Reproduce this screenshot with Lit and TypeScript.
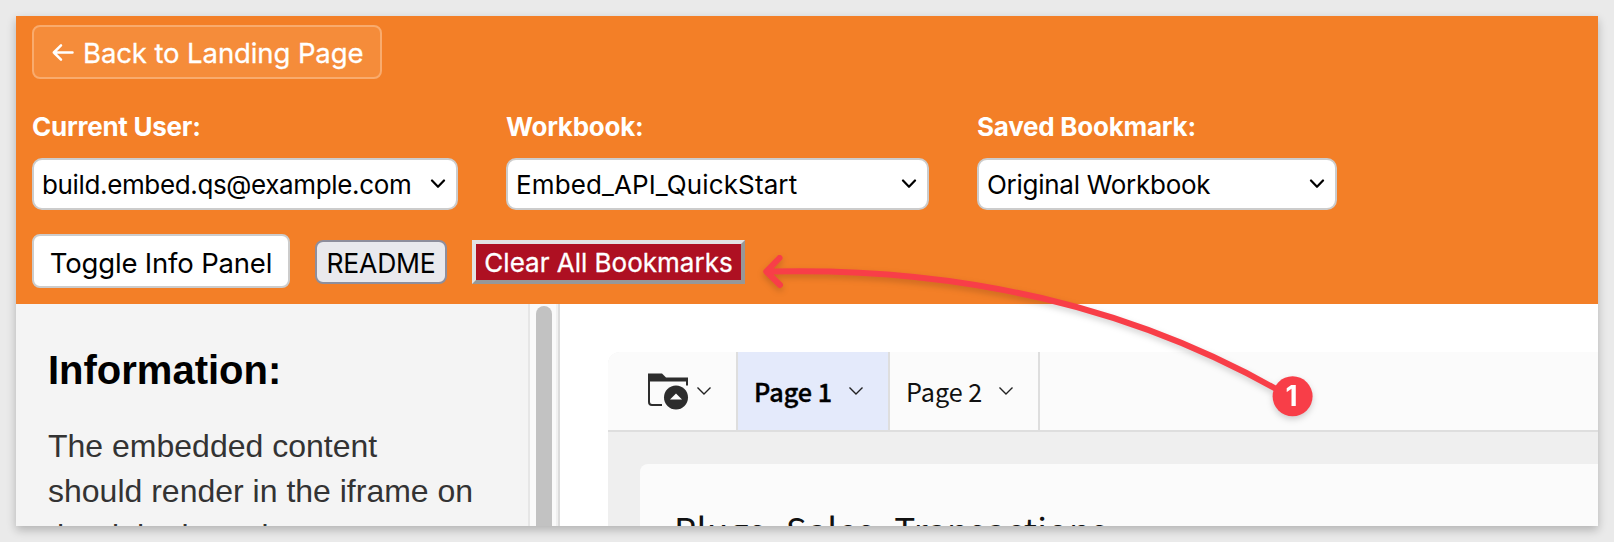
import { LitElement, html, svg, css } from 'lit';

const selectChevron = svg`<svg class="chevron" width="16" height="10" viewBox="0 0 16 10"><path d="M2 1.5 8 7.8 14 1.5" fill="none" stroke="#000" stroke-width="2.2" stroke-linecap="round" stroke-linejoin="round"/></svg>`;
const tabChevron = svg`<svg class="tab-chevron" width="16" height="10" viewBox="0 0 16 10"><path d="M1.5 1.5 8 8 14.5 1.5" fill="none" stroke="#222" stroke-width="1.4"/></svg>`;

const fields = [
  { label: 'Current User:', value: 'build.embed.qs@example.com', cls: 'user' },
  { label: 'Workbook:', value: 'Embed_API_QuickStart', cls: 'workbook' },
  { label: 'Saved Bookmark:', value: 'Original Workbook', cls: 'bookmark' },
];

class AppRoot extends LitElement {
  static styles = css`
    :host {
      display: block;
      position: relative;
      height: 542px;
      padding: 16px;
      box-sizing: border-box;
      overflow: hidden;
      background: #eaeaea;
      font-family: Inter, sans-serif;
    }
    * { box-sizing: border-box; }
    .window {
      display: flex;
      flex-direction: column;
      height: 510px;
      overflow: hidden;
      background: #fff;
    }
    .frame { box-shadow: 0 4px 9px rgba(0, 0, 0, 0.24); }
    header {
      flex: none;
      height: 288px;
      padding: 9px 16px 0;
      background: #f37f27;
    }
    button, .select { font-family: inherit; margin: 0; white-space: nowrap; }
    .back {
      display: flex;
      align-items: center;
      width: 350px;
      height: 54px;
      padding: 0 0 0 17px;
      border: 2px solid #f9ab6d;
      border-radius: 8px;
      background: #f58c3a;
      color: #fff;
      font-size: 27.5px;
      letter-spacing: -0.1px;
      -webkit-text-stroke: 0.3px #fff;
    }
    .back svg { margin-right: 8px; }
    .back span { padding-top: 2px; }
    .fields { display: flex; gap: 48px; margin-top: 29px; }
    .label {
      height: 37px;
      line-height: 38px;
      margin-bottom: 13px;
      color: #fff;
      font-size: 26px;
      font-weight: 700;
      letter-spacing: -0.25px;
    }
    .select {
      display: flex;
      align-items: center;
      justify-content: space-between;
      height: 52px;
      padding: 0 10px 0 8px;
      border: 2px solid #ccc;
      border-radius: 10px;
      background: #fff;
      color: #000;
      font-size: 26px;
    }
    .select span { padding-top: 1px; }
    .user { width: 426px; letter-spacing: -0.36px; }
    .workbook { width: 423px; letter-spacing: 0.12px; }
    .bookmark { width: 360px; letter-spacing: -0.27px; }
    .actions { display: flex; align-items: center; margin-top: 24px; height: 54px; }
    .actions button { color: #000; padding: 0; }
    .actions .toggle {
      width: 258px;
      height: 54px;
      padding-top: 3px;
      border: 2px solid #ccc;
      border-radius: 8px;
      background: #fff;
      font-size: 27.5px;
      letter-spacing: -0.18px;
    }
    .actions .readme {
      width: 132px;
      height: 44px;
      margin: 2px 0 0 25px;
      padding-top: 1px;
      border: 2px solid #8e8e9c;
      border-radius: 8px;
      background: #e9e9ed;
      font-size: 26.5px;
      letter-spacing: -0.2px;
    }
    .actions .clear {
      width: 273px;
      height: 44px;
      margin: 2px 0 0 25px;
      padding-top: 1px;
      border: 4px solid;
      border-color: #e3e3e3 #979797 #979797 #e3e3e3;
      background: #ae1022;
      color: #fff;
      font-size: 26px;
      -webkit-text-stroke: 0.3px #fff;
    }
    .content { display: flex; flex: 1; min-height: 0; }
    .info {
      width: 514px;
      flex: none;
      padding: 44px 32px 0;
      border-right: 2px solid #e6e6e6;
      background: #f4f4f4;
      font-family: "Liberation Sans", sans-serif;
      overflow: hidden;
    }
    h2 { margin: 0; font-size: 40px; line-height: 44px; color: #000; }
    p { margin: 32px 0 0; width: 445px; font-size: 32px; line-height: 44.8px; color: #333; }
    .track {
      width: 30px;
      flex: none;
      padding: 2px 0 0 6px;
      border-right: 2px solid #dcdcdc;
      background: linear-gradient(90deg, #fafafa 26px, #f0f0f0 26px);
    }
    .thumb { width: 16px; height: 400px; border-radius: 8px; background: #c2c2c2; }
    .embed {
      flex: 1;
      margin: 48px 0 0 48px;
      border-top-left-radius: 12px;
      overflow: hidden;
      background: #efefef;
      font-family: "Noto Sans CJK SC", sans-serif;
      color: #111;
    }
    .tabs {
      display: flex;
      height: 80px;
      border-bottom: 2px solid #dedede;
      background: #fbfbfb;
      font-size: 25.2px;
    }
    .cell { display: flex; align-items: center; border-right: 2px solid #dedede; }
    .folder { width: 130px; padding-left: 40px; }
    .folder .tab-chevron { margin-left: 6px; }
    .tab { width: 150px; padding-left: 16px; justify-content: space-between; padding-right: 24px; }
    .tab span { white-space: nowrap; }
    .active {
      width: 152px;
      padding-left: 16px;
      background: #e4eafb;
      color: #000;
      font-weight: 500;
      -webkit-text-stroke: 0.4px #000;
    }
    .card {
      height: 120px;
      margin: 32px 0 0 32px;
      padding: 40px 0 0 34px;
      border-top-left-radius: 8px;
      background: #fbfbfb;
      font-size: 35.2px;
      line-height: 50px;
      letter-spacing: 0.35px;
      white-space: nowrap;
    }
    .annotation { position: absolute; left: 750px; top: 240px; filter: drop-shadow(0 3px 3px rgba(0, 0, 0, 0.18)); }
    .number { font: 700 28px Inter, sans-serif; fill: #fff; }
  `;

  render() {
    return html`
      <div class="frame"><div class="window">
        <header>
          <button class="back">
            <svg width="24" height="20" viewBox="0 0 24 20"><path d="M21.5 10.5H2.8M10 3.3 2.8 10.5 10 17.7" fill="none" stroke="#fff" stroke-width="2.5" stroke-linecap="round" stroke-linejoin="round"/></svg>
            <span>Back to Landing Page</span>
          </button>
          <div class="fields">
            ${fields.map(f => html`<div>
              <div class="label">${f.label}</div>
              <div class="select ${f.cls}"><span>${f.value}</span>${selectChevron}</div>
            </div>`)}
          </div>
          <div class="actions">
            <button class="toggle">Toggle Info Panel</button>
            <button class="readme">README</button>
            <button class="clear">Clear All Bookmarks</button>
          </div>
        </header>
        <div class="content">
          <section class="info">
            <h2>Information:</h2>
            <p>The embedded content<br>should render in the iframe on<br>the right, based on</p>
          </section>
          <div class="track"><div class="thumb"></div></div>
          <main class="embed">
            <nav class="tabs">
              <div class="cell folder">
                <svg width="42" height="38" viewBox="0 0 42 38">
                  <path d="M0 1.5h14l4 4h22v4H0z" fill="#2d2d2d"/>
                  <path d="M1 8.5V30a3 3 0 0 0 3 3h10M39 8.500v5" fill="none" stroke="#2d2d2d" stroke-width="2"/>
                  <circle cx="28" cy="25.500" r="12" fill="#2d2d2d"/>
                  <path d="M22 27.500l6-6 6 6z" fill="#fff"/>
                </svg>
                ${tabChevron}
              </div>
              <div class="cell tab active"><span>Page 1</span>${tabChevron}</div>
              <div class="cell tab"><span>Page 2</span>${tabChevron}</div>
            </nav>
            <div class="card">Plugs_Sales_Transactions</div>
          </main>
        </div>
      </div></div>
      <svg class="annotation" width="580" height="190" viewBox="750 240 580 190">
        <path d="M767 271.6Q1055 264 1278 390M779.5 258 766.3 271.6 780 285" fill="none" stroke="#f83e48" stroke-width="6" stroke-linecap="round" stroke-linejoin="round"/>
        <circle cx="1292.6" cy="396.3" r="20" fill="#f83e48"/>
        <text class="number" x="1291.5" y="405.5" text-anchor="middle">1</text>
      </svg>
    `;
  }
}
customElements.define('app-root', AppRoot);
